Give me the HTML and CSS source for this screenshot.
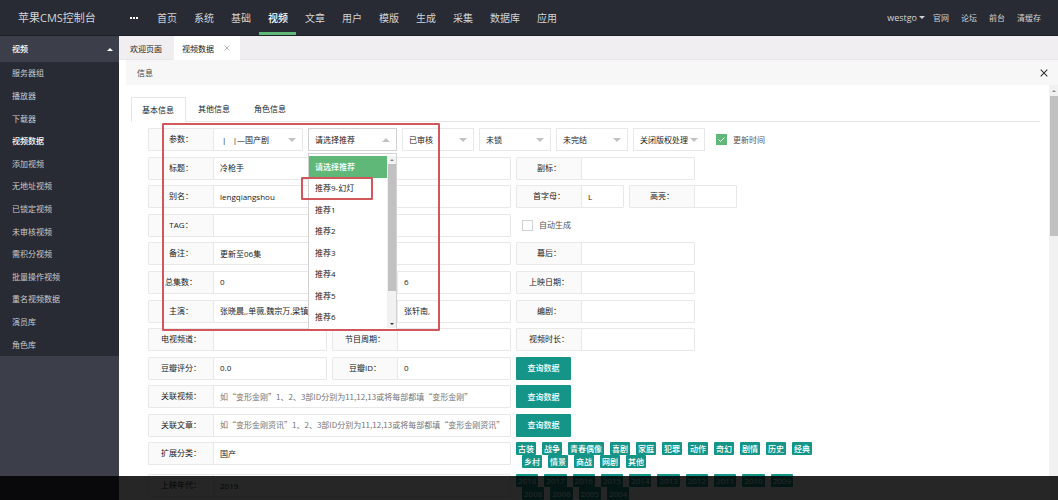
FILE: index.html
```html
<!DOCTYPE html>
<html lang="zh-CN">
<head>
<meta charset="utf-8">
<title>苹果CMS控制台</title>
<link rel="stylesheet" href="styles.css">
</head>
<body>
<header class="top">
  <div class="logo">苹果CMS控制台</div>
  <button class="dots" aria-label="菜单"><svg width="8" height="2" viewBox="0 0 8 2"><path d="M0 0h2v2H0zM3 0h2v2H3zM6 0h2v2H6z" fill="#fff"/></svg></button>
  <nav class="nav">
    <a href="#">首页</a><a href="#">系统</a><a href="#">基础</a><a href="#" class="on">视频</a><a href="#">文章</a><a href="#">用户</a><a href="#">模版</a><a href="#">生成</a><a href="#">采集</a><a href="#">数据库</a><a href="#">应用</a>
  </nav>
  <nav class="user">
    <a href="#" class="name">westgo<i class="tri down"></i></a><a href="#">官网</a><a href="#">论坛</a><a href="#">前台</a><a href="#">清缓存</a>
  </nav>
</header>
<div class="body">
  <aside class="side">
    <a href="#" class="group">视频<i class="tri up"></i></a>
    <nav class="menu">
      <a href="#">服务器组</a><a href="#">播放器</a><a href="#">下载器</a><a href="#" class="on">视频数据</a><a href="#">添加视频</a><a href="#">无地址视频</a><a href="#">已锁定视频</a><a href="#">未审核视频</a><a href="#">需积分视频</a><a href="#">批量操作视频</a><a href="#">重名视频数据</a><a href="#">演员库</a><a href="#">角色库</a>
    </nav>
  </aside>
  <main class="main">
    <div class="pages">
      <a href="#">欢迎页面</a>
      <a href="#" class="on">视频数据<svg width="6" height="6" viewBox="0 0 6 6"><path d="M.5.5l5 5M5.500.5l-5 5" stroke="#bbb" fill="none"/></svg></a>
    </div>
    <div class="info">
      <span>信息</span>
      <button class="close" aria-label="关闭"><svg width="8" height="8" viewBox="0 0 8 8"><path d="M.7.7l6.600 6.600M7.300.7L.7 7.300" stroke="#333" stroke-width="1.100" fill="none"/></svg></button>
    </div>
    <div class="panel">
      <form class="form">
        <div class="tabs"><a href="#" class="on">基本信息</a><a href="#">其他信息</a><a href="#">角色信息</a></div>
        <div class="rows">
          <div class="row">
            <div class="field wide-sel"><label for="p1">参数<span>：</span></label><span class="sel"><select id="p1"><option>&nbsp;|&nbsp;&nbsp;&nbsp;|—国产剧</option></select></span></div>
            <div class="sel open big"><select aria-label="推荐"><option>请选择推荐</option></select>
              <div class="drop">
                <ul class="options"><li class="on">请选择推荐</li><li>推荐9-幻灯</li><li>推荐1</li><li>推荐2</li><li>推荐3</li><li>推荐4</li><li>推荐5</li><li>推荐6</li></ul>
                <div class="bar"><i class="tri up"></i><i class="thumb"></i><i class="tri down"></i></div>
              </div>
            </div>
            <div class="sel"><select aria-label="审核"><option>已审核</option></select></div>
            <div class="sel"><select aria-label="锁定"><option>未锁</option></select></div>
            <div class="sel"><select aria-label="完结"><option>未完结</option></select></div>
            <div class="sel"><select aria-label="版权"><option>关闭版权处理</option></select></div>
            <label class="check"><input type="checkbox" checked>更新时间</label>
          </div>
          <div class="row">
            <div class="field long"><label for="f1">标题<span>：</span></label><input id="f1" value="冷枪手"></div>
            <div class="field"><label for="f2">副标<span>：</span></label><input id="f2"></div>
          </div>
          <div class="row">
            <div class="field long"><label for="f3">别名<span>：</span></label><input id="f3" value="lengqiangshou"></div>
            <div class="field short"><label for="f4">首字母<span>：</span></label><input id="f4" value="L"></div>
            <div class="field short"><label for="f5">高亮<span>：</span></label><input id="f5"></div>
          </div>
          <div class="row">
            <div class="field long"><label for="f6">TAG<span>：</span></label><input id="f6"></div>
            <label class="check"><input type="checkbox">自动生成</label>
          </div>
          <div class="row">
            <div class="field long"><label for="f7">备注<span>：</span></label><input id="f7" value="更新至06集"></div>
            <div class="field"><label for="f8">幕后<span>：</span></label><input id="f8"></div>
          </div>
          <div class="row">
            <div class="field"><label for="f9">总集数<span>：</span></label><input id="f9" value="0"></div>
            <div class="field"><label for="f10"></label><input id="f10" value="6"></div>
            <div class="field"><label for="f11">上映日期<span>：</span></label><input id="f11"></div>
          </div>
          <div class="row">
            <div class="field"><label for="f12">主演<span>：</span></label><input id="f12" value="张晓晨,,单薇,魏宗万,梁镇"></div>
            <div class="field"><label for="f13"></label><input id="f13" value="张轩南,"></div>
            <div class="field"><label for="f14">编剧<span>：</span></label><input id="f14"></div>
          </div>
          <div class="row">
            <div class="field"><label for="f15">电视频道<span>：</span></label><input id="f15"></div>
            <div class="field"><label for="f16">节目周期<span>：</span></label><input id="f16"></div>
            <div class="field"><label for="f17">视频时长<span>：</span></label><input id="f17"></div>
          </div>
          <div class="row">
            <div class="field"><label for="f18">豆瓣评分<span>：</span></label><input id="f18" value="0.0"></div>
            <div class="field"><label for="f19">豆瓣ID<span>：</span></label><input id="f19" value="0"></div>
            <button type="button" class="query">查询数据</button>
          </div>
          <div class="row">
            <div class="field long"><label for="f20">关联视频<span>：</span></label><input id="f20" placeholder="如“变形金刚”1、2、3部ID分别为11,12,13或将每部都填“变形金刚”"></div>
            <button type="button" class="query">查询数据</button>
          </div>
          <div class="row">
            <div class="field long"><label for="f21">关联文章<span>：</span></label><input id="f21" placeholder="如“变形金刚资讯”1、2、3部ID分别为11,12,13或将每部都填“变形金刚资讯”"></div>
            <button type="button" class="query">查询数据</button>
          </div>
        </div>
        <div class="row">
          <div class="field long"><label for="f22">扩展分类<span>：</span></label><input id="f22" value="国产"></div>
          <div class="tags">
            <div><a href="#">古装</a><a href="#">战争</a><a href="#">青春偶像</a><a href="#">喜剧</a><a href="#">家庭</a><a href="#">犯罪</a><a href="#">动作</a><a href="#">奇幻</a><a href="#">剧情</a><a href="#">历史</a><a href="#">经典</a></div>
            <div><a href="#">乡村</a><a href="#">情景</a><a href="#">商战</a><a href="#">网剧</a><a href="#">其他</a></div>
          </div>
        </div>
        <div class="row">
          <div class="field long"><label for="f23">上映年代<span>：</span></label><input id="f23" value="2019"></div>
          <div class="tags">
            <div><a href="#">2018</a><a href="#">2017</a><a href="#">2016</a><a href="#">2015</a><a href="#">2014</a><a href="#">2013</a><a href="#">2012</a><a href="#">2011</a><a href="#">2010</a><a href="#">2009</a></div>
            <div><a href="#">2008</a><a href="#">2006</a><a href="#">2005</a><a href="#">2004</a></div>
          </div>
        </div>
      </form>
      <div class="bar page-bar"><i class="tri up"></i><i class="thumb"></i></div>
    </div>
  </main>
</div>
<div class="mark mark-area"></div>
<div class="mark mark-option"></div>
<div class="shade"></div>
</body>
</html>
```
FILE: styles.css
```css
* { box-sizing: border-box; }
body {
  margin: 0;
  height: 100vh;
  overflow: hidden;
  display: flex;
  flex-direction: column;
  background: #fff;
  color: #222;
  font: 8px/12px "Open Sans", "Noto Sans CJK SC", sans-serif;
}
a { color: inherit; text-decoration: none; }
button, input, select { font: inherit; color: inherit; }
button { border: 0; padding: 0; background: none; }
svg { display: block; }

.tri { width: 0; height: 0; border: 3px solid transparent; }
.tri.down { border-top-color: currentColor; border-bottom: 0; }
.tri.up { border-bottom-color: currentColor; border-top: 0; }

/* header */
.top {
  flex: none;
  display: flex;
  align-items: stretch;
  height: 36px;
  padding-right: 17px;
  background: #282b33;
  border-bottom: 1px solid #1d2026;
  color: #d2d3d6;
}
.logo { width: 119px; padding-left: 18px; font-size: 11px; line-height: 36px; }
.dots { width: 29px; padding-left: 11px; }
.nav { display: flex; font-size: 10px; line-height: 36px; }
.nav a { padding: 0 8px 0 9px; }
.nav .on { color: #fff; font-weight: 500; box-shadow: inset 0 -3px #5fb878; }
.user { display: flex; gap: 12px; margin-left: auto; line-height: 36px; }
.user .name { display: flex; align-items: center; gap: 2px; margin-right: -4px; font-size: 9px; }

/* sidebar */
.body { flex: 1; min-height: 0; display: flex; }
.side { flex: none; width: 119px; background: #3c3f4a; color: #c9cacd; }
.group { display: flex; align-items: center; justify-content: space-between; height: 26px; padding: 0 6px 0 12px; color: #fff; font-weight: 500; }
.menu { display: grid; grid-auto-rows: 1fr; height: 294px; background: #282b33; }
.menu a { display: flex; align-items: center; padding-left: 12px; }
.menu .on { color: #fff; font-weight: 500; }

/* main area */
.main { flex: 1; min-width: 0; display: flex; flex-direction: column; }
.pages { flex: none; display: flex; height: 24px; background: #f0eef0; border-bottom: 1px solid #e9e9e9; line-height: 23px; }
.pages a { display: flex; align-items: center; gap: 10px; height: 24px; padding: 0 12px 0 11px; }
.pages .on { padding: 0 10px 0 8px; background: #fff; }
.info { flex: none; display: flex; align-items: center; justify-content: space-between; height: 25px; margin-left: 7px; padding: 0 10px 0 11px; background: #f7f7f7; color: #444; }
.panel { flex: 1; min-height: 0; display: flex; justify-content: space-between; overflow: hidden; }
.form { flex: 1; padding: 12px 9px 0 12px; display: flex; flex-direction: column; }
.tabs { flex: none; display: flex; height: 25px; margin-bottom: 6px; border-bottom: 1px solid #e6e6e6; line-height: 24px; }
.tabs a { padding: 0 12px; }
.tabs .on { height: 25px; padding: 0 11px 0 10px; border: 1px solid #e6e6e6; border-bottom: 0; background: #fff; }
.rows { flex: none; display: grid; align-content: space-between; height: 309px; margin-bottom: 5px; }

/* rows and fields */
.row { flex: none; display: flex; align-items: flex-start; gap: 5px; min-height: 23px; padding-left: 17px; }
.form > .row { margin-bottom: 6px; }
.field { flex: none; display: flex; width: 179px; height: 23px; border: 1px solid #e8e8e8; border-radius: 1px; }
.field.long { width: 363px; }
.field.short { width: 108px; }
.field.wide-sel { width: 155px; }
.field > label { flex: none; width: 65px; background: #fafafa; border-right: 1px solid #e8e8e8; line-height: 20px; text-align: center; }
.field > label span { font-family: "Noto Sans CJK TC", sans-serif; }
.field > input { flex: 1; min-width: 0; padding: 0 0 0 6px; border: 0; background: #fff; outline: 0; }
.field > input::placeholder { color: #757575; opacity: 1; font-family: "Noto Sans CJK SC", sans-serif; }
.sel { position: relative; flex: none; width: 72px; height: 23px; border: 1px solid #e8e8e8; }
.sel.big { width: 89px; border-color: #d2d2d2; }
.field .sel { flex: 1; height: 21px; border: 0; }
.sel select { width: 100%; height: 100%; padding: 0 16px 0 6px; border: 0; appearance: none; background: #fff; text-overflow: clip; }
.sel::after { content: ""; position: absolute; right: 6px; top: 9px; border: 4px solid transparent; border-top-color: #c2c2c2; border-bottom: 0; }
.sel.open::after { border-top: 0; border-bottom: 4px solid #c2c2c2; }
.check { display: flex; align-items: center; gap: 6px; height: 23px; margin-left: 6px; color: #555; }
.check input { appearance: none; width: 11px; height: 11px; margin: 0; border: 1px solid #d2d2d2; background: #fff; }
.check input:checked {
  border-color: #5fb878;
  background: #5fb878 url("data:image/svg+xml,%3Csvg xmlns='http://www.w3.org/2000/svg' viewBox='0 0 9 9'%3E%3Cpath d='M1.500 4.500l2 2 4-4' fill='none' stroke='white'/%3E%3C/svg%3E") center / 9px 9px no-repeat;
}
.query { width: 55px; height: 23px; border-radius: 1px; background: #159588; color: #fff; font-weight: 500; }
.tags { display: grid; height: 26px; }
.tags div { display: flex; gap: 6px; }
.tags div + div { margin-left: 6px; }
.tags a { height: 13px; padding: 0 2px; border-radius: 1px; background: #159588; color: #fff; line-height: 13px; font-weight: 500; }

/* open drop-down */
.drop { position: absolute; z-index: 2; top: 24px; left: -1px; display: flex; width: 89px; height: 177px; padding: 2px 0 1px; border: 1px solid #d2d2d2; background: #fff; }
.options { flex: 1; display: grid; grid-auto-rows: 1fr; margin: 0; padding: 0; list-style: none; }
.options li { display: flex; align-items: center; padding-left: 6px; }
.options .on { background: #5fb878; color: #fff; font-weight: 500; }
.bar { flex: none; display: flex; flex-direction: column; align-items: center; width: 9px; padding: 3px 0; background: #f1f1f1; color: #888; }
.bar .tri { flex: none; border-width: 2px; }
.bar .tri.down { margin-top: auto; border-bottom: 0; color: #333; }
.bar .tri.up { border-top: 0; }
.thumb { width: 8px; height: 127px; margin-top: 3px; background: #c1c1c1; }
.page-bar { padding: 5px 0; }
.page-bar .thumb { height: 140px; margin-top: 4px; }

/* overlays */
.mark { position: absolute; z-index: 3; border: 2px solid #d2575c; border-radius: 1px; }
.mark-area { left: 162px; top: 123px; width: 278px; height: 208px; }
.mark-option { left: 301px; top: 177px; width: 72px; height: 23px; }
.shade { position: absolute; z-index: 4; left: 0; right: 0; bottom: 0; height: 24px; background: rgba(0, 0, 0, .85); }
```
